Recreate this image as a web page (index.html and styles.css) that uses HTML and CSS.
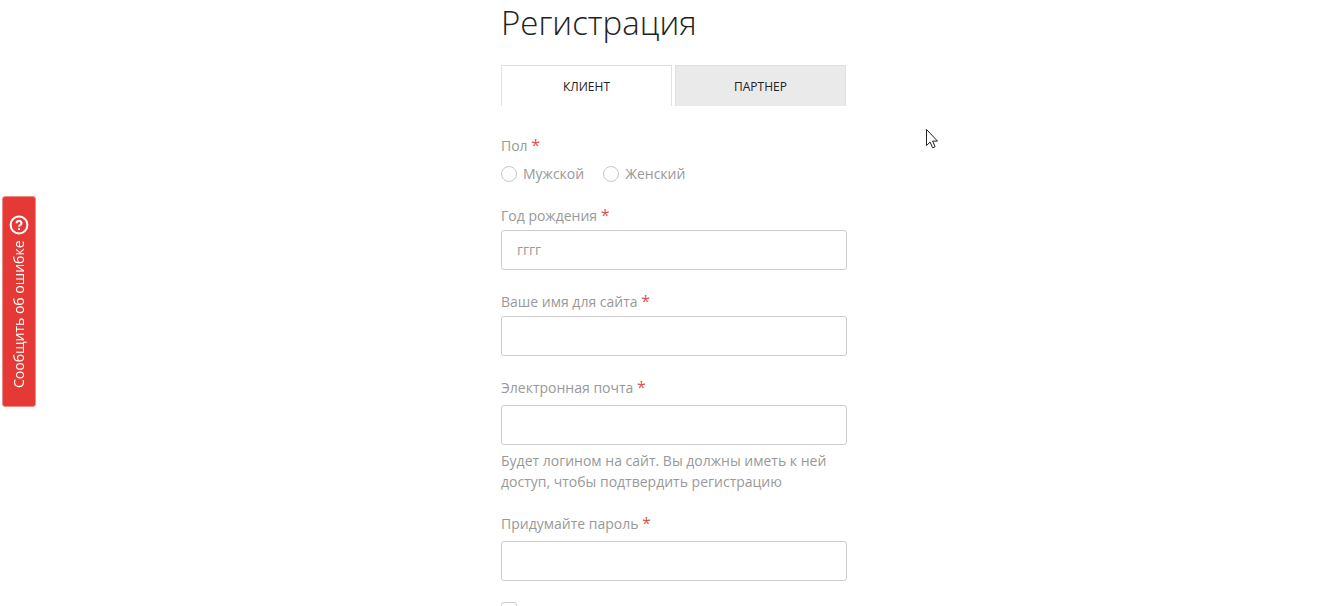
FILE: index.html
```html
<!DOCTYPE html>
<html lang="ru">
  <head>
    <meta charset="UTF-8" />
    <meta name="viewport" content="width=device-width, initial-scale=1.0" />
    <title>Регистрация</title>
    <link rel="stylesheet" href="styles.css">
  </head>

  <body>
    <button type="button" class="feedback-btn">
      <span>Сообщить об ошибке</span>
      <svg class="feedback-icon" viewBox="0 0 20 20" aria-hidden="true">
        <circle cx="10" cy="10" r="8.4" />
        <path d="M7.6 8.2a2.4 2.2 0 1 1 3.7 1.7c-.9.6-1.3.9-1.3 1.9" />
        <path d="M10 13.3v1.6" />
      </svg>
    </button>

    <main class="page">
      <div class="registration">
        <h1>Регистрация</h1>

        <div class="tabs" role="tablist">
          <button type="button" class="tab active" role="tab" aria-selected="true">КЛИЕНТ</button>
          <button type="button" class="tab" role="tab" aria-selected="false">ПАРТНЕР</button>
        </div>

        <form id="registrationForm">
          <fieldset class="form-group">
            <legend class="label">Пол <span class="required">*</span></legend>
            <div class="radio-row">
              <label class="radio" for="male"><input type="radio" id="male" name="gender" required />Мужской</label>
              <label class="radio" for="female"><input type="radio" id="female" name="gender" />Женский</label>
            </div>
          </fieldset>
          <div class="form-group">
            <label class="label" for="year">Год рождения <span class="required">*</span></label>
            <input type="text" class="field" id="year" placeholder="гггг" required />
          </div>
          <div class="form-group">
            <label class="label" for="name">Ваше имя для сайта <span class="required">*</span></label>
            <input type="text" class="field" id="name" required />
          </div>
          <div class="form-group spaced">
            <label class="label" for="email">Электронная почта <span class="required">*</span></label>
            <input type="email" class="field" id="email" aria-describedby="emailHelp" required />
            <p class="help" id="emailHelp">Будет логином на сайт. Вы должны иметь к ней доступ, чтобы подтвердить регистрацию</p>
          </div>
          <div class="form-group spaced">
            <label class="label" for="password">Придумайте пароль <span class="required">*</span></label>
            <input type="password" class="field" id="password" required />
          </div>
          <input type="checkbox" class="checkbox" id="showPassword" aria-label="Показать пароль" />
        </form>
      </div>
    </main>

    <svg class="cursor" viewBox="0 0 12 20" aria-hidden="true">
      <path d="M.5.5v16l3.6-3.4 2.5 5.7 2.5-1.1-2.5-5.6h4.9z" />
    </svg>
  </body>
</html>
```

FILE: styles.css
```css
* {
  box-sizing: border-box;
}

html {
  scrollbar-width: none;
}

body {
  margin: 0;
  background-color: #fff;
  color: #999;
  font-family: "Open Sans", "Noto Sans", sans-serif;
  font-size: 14px;
  line-height: 21px;
}

button,
input {
  font-family: inherit;
}

.page {
  padding-left: 5px;
}

.registration {
  width: 100%;
  max-width: 346px;
  margin: 0 auto;
}

h1 {
  margin: 0 0 20px;
  color: #222;
  font-size: 33px;
  font-weight: 300;
  line-height: 45px;
}

.tabs {
  display: flex;
  gap: 3px;
  margin-bottom: 29px;
  padding-right: 1px;
}

.tab {
  flex: 1;
  height: 41px;
  padding: 0;
  border: 1px solid #e0e0e0;
  border-bottom: none;
  background-color: #eaeaea;
  color: #222;
  font-size: 12px;
  cursor: pointer;
}

.tab.active {
  background-color: #fff;
}

.form-group {
  margin: 0 0 21px;
  padding: 0;
  border: none;
}

.label {
  display: block;
  margin-bottom: 4px;
  padding: 0;
}

.spaced .label {
  margin-bottom: 7px;
}

.required {
  color: #d9534f;
  font-size: 16px;
  line-height: 16px;
}

.radio-row {
  display: flex;
  gap: 19px;
  padding-top: 4px;
  line-height: 20px;
}

.radio {
  display: flex;
  align-items: center;
  gap: 6px;
}

.radio input {
  appearance: none;
  width: 16px;
  height: 16px;
  margin: 0;
  border: 1px solid #c8c8c8;
  border-radius: 50%;
}

.radio input:checked {
  border: 5px solid #e53935;
}

.field {
  display: block;
  width: 100%;
  height: 40px;
  padding: 0 15px 1px;
  border: 1px solid #ccc;
  border-radius: 3px;
  background-color: #fff;
  color: #222;
  font-size: 14px;
}

.field::placeholder {
  color: #999;
}

.field:focus {
  border-color: #999;
  outline: none;
}

.help {
  margin: 5px 0 0;
}

.checkbox {
  appearance: none;
  display: block;
  width: 16px;
  height: 16px;
  margin: 0;
  border: 1px solid #ccc;
  border-radius: 3px;
}

.checkbox:checked {
  background-color: #e53935;
}

.feedback-btn {
  position: fixed;
  top: 196px;
  left: 2px;
  display: flex;
  align-items: center;
  justify-content: center;
  gap: 6px;
  width: 34px;
  height: 211px;
  padding: 0;
  border: 1px solid #f08a87;
  border-radius: 3px;
  background-color: #e53935;
  color: #fff;
  font-size: 14px;
  white-space: nowrap;
  writing-mode: vertical-rl;
  transform: rotate(180deg);
  cursor: pointer;
}

.feedback-icon {
  flex: none;
  width: 20px;
  height: 20px;
  fill: none;
  stroke: #fff;
  stroke-width: 2;
  transform: rotate(180deg);
}

.cursor {
  position: absolute;
  top: 129px;
  left: 926px;
  width: 12px;
  height: 20px;
  fill: #fff;
  stroke: #222;
  pointer-events: none;
}
```
